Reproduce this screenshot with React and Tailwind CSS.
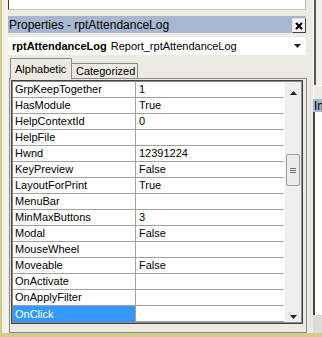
import React from "react";

const rows = [
  ["GrpKeepTogether", "1"],
  ["HasModule", "True"],
  ["HelpContextId", "0"],
  ["HelpFile", ""],
  ["Hwnd", "12391224"],
  ["KeyPreview", "False"],
  ["LayoutForPrint", "True"],
  ["MenuBar", ""],
  ["MinMaxButtons", "3"],
  ["Modal", "False"],
  ["MouseWheel", ""],
  ["Moveable", "False"],
  ["OnActivate", ""],
  ["OnApplyFilter", ""],
  ["OnClick", ""],
];

function UpArrow() {
  return (
    <svg width="7" height="4" viewBox="0 0 7 4">
      <polygon points="3.5,0 7,4 0,4" fill="#222" />
    </svg>
  );
}
function DownArrow() {
  return (
    <svg width="7" height="4" viewBox="0 0 7 4">
      <polygon points="0,0 7,0 3.5,4" fill="#222" />
    </svg>
  );
}

export default function App() {
  return (
    <div className="w-[322px] h-[337px] overflow-hidden bg-[#eceae2] flex flex-col text-black font-['Liberation_Sans',Arial,sans-serif]">
      <div className="flex h-[333px]">
        {/* left edge */}
        <div className="w-[2px] bg-[#d5ca8c]" />
        <div className="w-[6px] bg-[#f2f1ea]" />

        {/* properties panel */}
        <div className="w-[299px] flex flex-col">
          <div className="h-[10px] mr-px bg-white border-l border-l-[#3a3a3a] border-r border-r-[#b8b8b8] border-b border-b-[#c8c8c8]" />
          <div className="h-[6px]" />
          <div className="h-[17px] mr-px bg-[#a6b7cf] flex items-center justify-between">
            <span className="text-[12px] leading-none pl-px whitespace-nowrap">
              Properties - rptAttendanceLog
            </span>
            <div className="w-[14px] h-[15px] mt-[2px] self-start bg-[#f4f4f4] border border-t-[#e0e0e0] border-l-[#e0e0e0] border-r-[#404040] border-b-[#404040] flex items-center justify-center">
              <svg width="8" height="8" viewBox="0 0 8 8">
                <path d="M1 1 L7 7 M7 1 L1 7" stroke="#000" strokeWidth="2" />
              </svg>
            </div>
          </div>
          <div className="h-[4px]" />
          <div className="h-[18px] mr-px bg-white flex items-center pl-[4px] pr-[5px]">
            <span className="text-[11px] font-bold leading-none whitespace-nowrap">
              rptAttendanceLog
            </span>
            <span className="text-[11px] leading-none whitespace-nowrap ml-[4px]">
              Report_rptAttendanceLog
            </span>
            <div className="flex-1" />
            <DownArrow />
          </div>

          {/* tabs */}
          <div className="h-[23px] flex items-end pl-[2px]">
            <div className="relative z-10 w-[62px] h-[21px] -mb-px bg-[#eceae2] border-t border-l border-r border-[#8a8a8a] flex items-center pl-[4px]">
              <span className="text-[11px] leading-none">Alphabetic</span>
            </div>
            <div className="w-[66px] h-[15px] bg-[#eceae2] border-t border-r border-[#8a8a8a] flex items-center pl-[4px]">
              <span className="text-[11px] leading-none">Categorized</span>
            </div>
          </div>

          {/* tab page */}
          <div className="ml-px w-[298px] h-[255px] border border-[#8a8a8a] pt-px pl-px pr-[3px] pb-[8px]">
            <div className="border border-[#404040]">
              <div className="border border-[#8c8c8c] bg-white flex">
                <div className="w-[271px] flex flex-col">
                  {rows.map(([name, value], i) => {
                    const sel = name === "OnClick";
                    return (
                      <div key={name} className="h-[16px] flex text-[11px] leading-none">
                        <div
                          className={
                            "w-[123px] border-r border-[#a0a0a0] flex items-center pl-[2px] whitespace-nowrap " +
                            (sel ? "bg-[#3399ff] text-white" : "border-b")
                          }
                        >
                          {name}
                        </div>
                        <div className="flex-1 border-b border-[#a0a0a0] flex items-center pl-[3px] whitespace-nowrap">
                          {value}
                        </div>
                      </div>
                    );
                  })}
                </div>
                {/* scrollbar */}
                <div className="w-[17px] bg-[#efefed] border-l border-[#f8f8f8] flex flex-col">
                  <div className="h-[17px] flex justify-center pt-[9px]">
                    <UpArrow />
                  </div>
                  <div className="flex-1 flex flex-col px-px">
                    <div className="mt-[55px] h-[32px] border border-[#a0a0a0] bg-[#ebebeb] rounded-[2px] flex flex-col items-center justify-center gap-[1px]">
                      <div className="w-[6px] h-px bg-[#707070]" />
                      <div className="w-[6px] h-px bg-[#707070]" />
                      <div className="w-[6px] h-px bg-[#707070]" />
                    </div>
                  </div>
                  <div className="h-[17px] flex justify-center pt-[10px]">
                    <DownArrow />
                  </div>
                </div>
              </div>
            </div>
          </div>
        </div>

        {/* gap */}
        <div className="w-[6px]" />

        {/* right panel */}
        <div className="w-[9px] flex flex-col">
          <div className="h-[85px] border-l border-l-[#ffffff] flex">
            <div className="w-[2px] bg-[#555]" />
            <div className="flex-1 bg-[#f0f0ee]" />
          </div>
          <div className="h-[14px] border-t border-t-white border-l border-l-white" />
          <div className="h-[13px] bg-[#a6b7cf] overflow-hidden flex items-center pl-px">
            <span className="text-[12px] leading-none whitespace-nowrap">Immediate</span>
          </div>
          <div className="h-[203px] flex">
            <div className="w-[2px] bg-[#404040]" />
            <div className="flex-1 bg-white" />
          </div>
          <div className="flex-1 bg-[#dcdcd8]" />
        </div>
      </div>
      <div className="h-[4px] bg-[#d5ca8c]" />
    </div>
  );
}
